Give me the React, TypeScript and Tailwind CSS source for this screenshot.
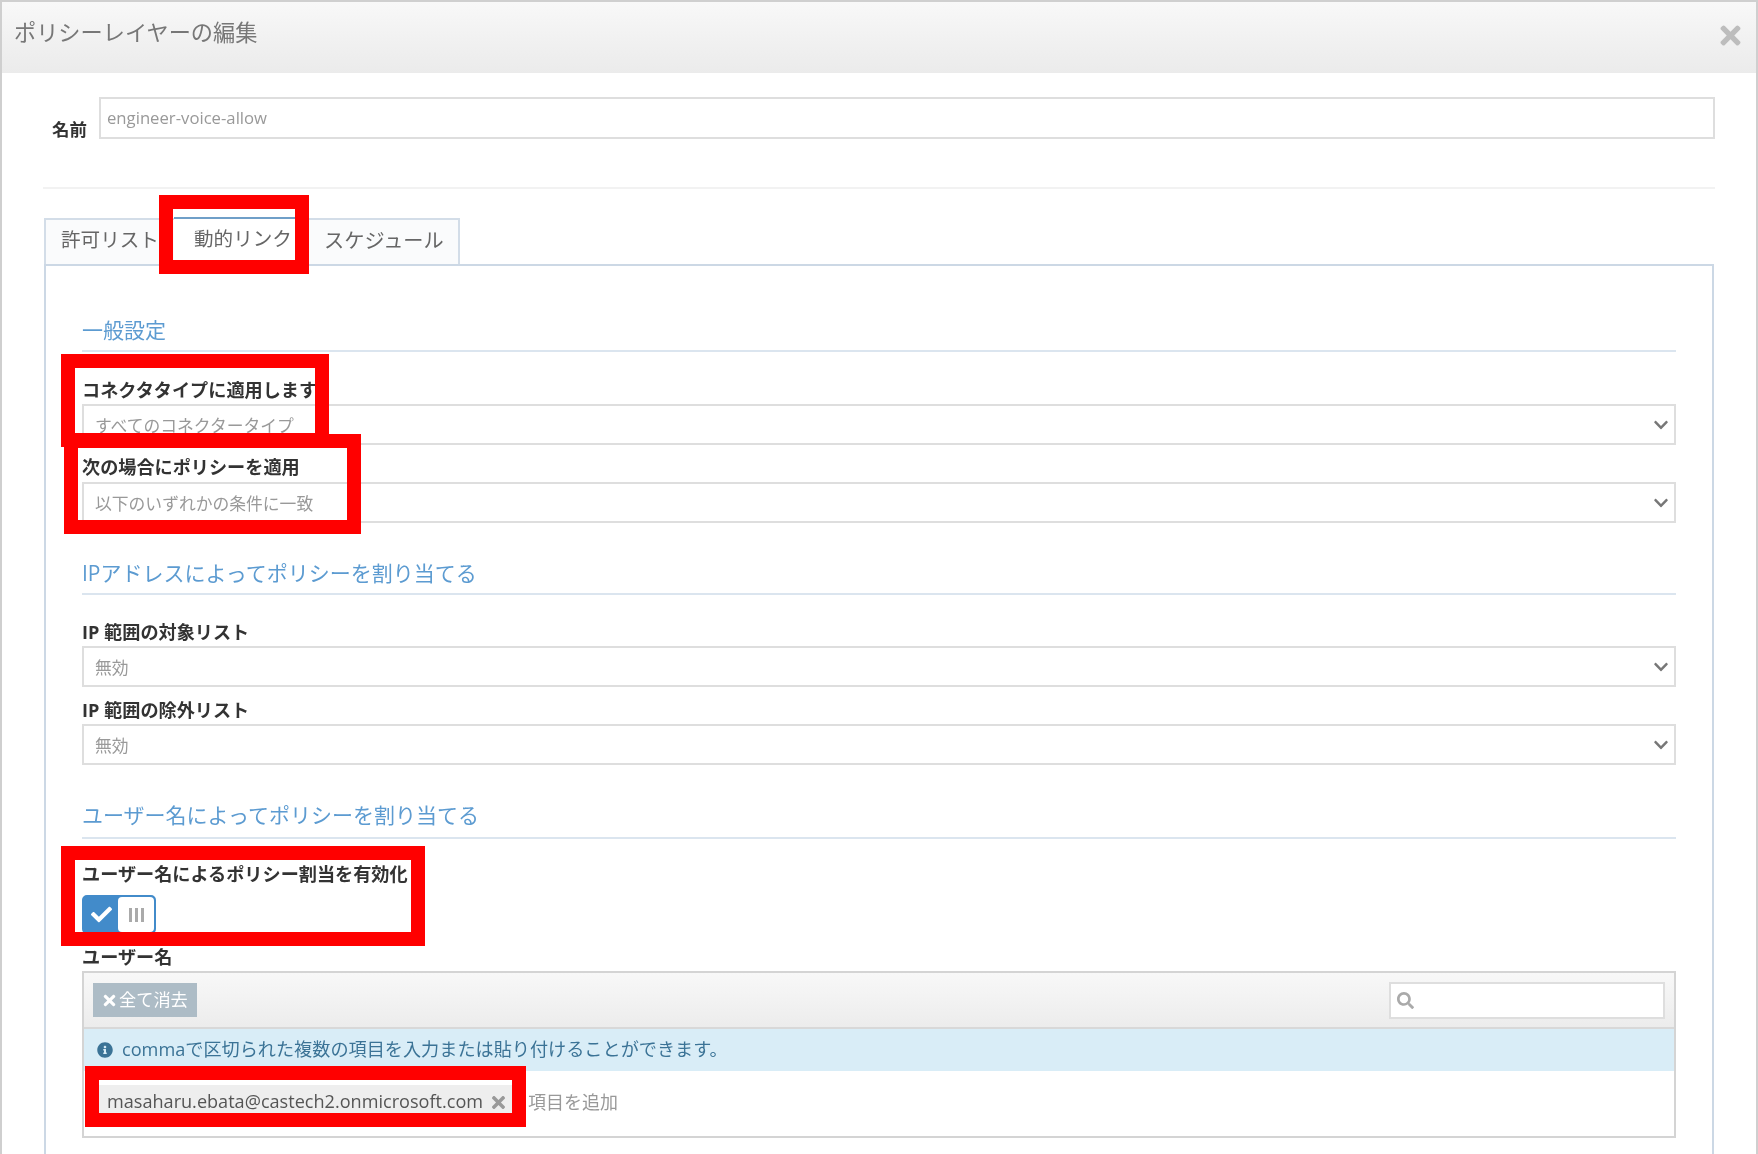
import { FaCheck, FaChevronDown, FaInfoCircle, FaSearch, FaTimes } from 'react-icons/fa'

const font = '[font-family:"Open_Sans","Noto_Sans_CJK_JP",sans-serif]'

function Heading({ text, className }: { text: string; className: string }) {
  return (
    <h3 className={`text-[21px] leading-[36px] text-[#5c9bd1] border-b-2 border-[#dbe5ef] ${className}`}>
      {text}
    </h3>
  )
}

function Label({ text, className }: { text: string; className: string }) {
  return <label className={`block h-[28px] text-[18.15px] leading-[28px] font-bold text-[#333] ${className}`}>{text}</label>
}

function SelectBox({ text, className = '' }: { text: string; className?: string }) {
  return (
    <div className={`flex items-center justify-between h-[41px] border-2 border-[#dedede] pl-[11px] pr-[5px] text-[16.8px] text-[#999] ${className}`}>
      <span className="pt-[2px]">{text}</span>
      <FaChevronDown className="text-[#777] text-[16px]" />
    </div>
  )
}

function RedBox({ className }: { className: string }) {
  return <div className={`absolute z-20 border-[14px] border-[#ff0000] ${className}`} />
}

export default function App() {
  return (
    <div className={`relative w-[1758px] h-[1154px] overflow-hidden bg-white border-t-2 border-l-2 border-r-2 border-[#cfcfcf] blur-[0.4px] ${font}`}>
      <header className="flex items-center justify-between h-[71px] pl-[12px] pr-[11px] pb-[10px] bg-gradient-to-b from-[#f8f8f8] to-[#ebebeb]">
        <h1 className="text-[22.2px] text-[#777]">ポリシーレイヤーの編集</h1>
        <FaTimes className="text-[#bdbdbd] text-[29px] mt-[6px]" />
      </header>

      <div className="flex items-start ml-[50px] mr-[41px] mt-[24px]">
        <span className="w-[47px] mt-[21px] text-[17.5px] leading-[22px] font-bold text-[#333]">名前</span>
        <div className="flex-1 flex items-center h-[42px] border-2 border-[#dedede] pl-[6px] text-[16.7px] text-[#999]">
          engineer-voice-allow
        </div>
      </div>

      <div className="ml-[41px] mr-[41px] mt-[47px] border-t-2 border-[#f2f2f2]" />

      <div className="flex ml-[42px] mt-[29px] h-[46px] text-[19.6px] text-[#666]">
        <div className="w-[130px] pl-[15px] pt-[5px] bg-[#fafbfc] border-2 border-b-0 border-r-0 border-[#d3dde8]">許可リスト</div>
        <div className="w-[130px] pl-[20px] pt-[5px] bg-white border-t-2 border-[#6f9fc8] -mt-[1px] h-[47px] relative z-10">動的リンク</div>
        <div className="w-[156px] pl-[20px] pt-[5px] text-[20.2px] bg-[#fafbfc] border-2 border-b-0 border-l-0 border-[#d3dde8]">スケジュール</div>
      </div>

      <main className="ml-[42px] mr-[42px] h-[900px] border-2 border-[#ccd8e5] pl-[36px] pr-[36px]">
        <Heading text="一般設定" className="mt-[46px] h-[40px]" />
        <Label text="コネクタタイプに適用します" className="mt-[24px]" />
        <SelectBox text="すべてのコネクタータイプ" />
        <Label text="次の場合にポリシーを適用" className="mt-[8px] mb-[1px]" />
        <SelectBox text="以下のいずれかの条件に一致" />

        <Heading text="IPアドレスによってポリシーを割り当てる" className="mt-[32px] h-[40px]" />
        <Label text="IP 範囲の対象リスト" className="mt-[23px]" />
        <SelectBox text="無効" />
        <Label text="IP 範囲の除外リスト" className="mt-[9px]" />
        <SelectBox text="無効" />

        <Heading text="ユーザー名によってポリシーを割り当てる" className="mt-[32px] h-[42px]" />
        <Label text="ユーザー名によるポリシー割当を有効化" className="mt-[21px]" />
        <div className="flex w-[74px] h-[39px] mt-[7px] rounded-[5px] border-2 border-[#428bca] bg-[#428bca]">
          <div className="flex items-center justify-center w-[34px]">
            <FaCheck className="text-white text-[21px]" />
          </div>
          <div className="flex-1 flex items-center justify-center gap-[3px] bg-white rounded-[4px]">
            <span className="w-[3px] h-[14px] bg-[#aaa]" />
            <span className="w-[3px] h-[14px] bg-[#aaa]" />
            <span className="w-[3px] h-[14px] bg-[#aaa]" />
          </div>
        </div>
        <Label text="ユーザー名" className="mt-[9px]" />

        <div className="h-[167px] border-2 border-[#d4d4d4]">
          <div className="flex items-center justify-between h-[56px] px-[9px] border-b-2 border-[#d8d8d8] bg-gradient-to-b from-[#f8f8f8] to-[#ececec]">
            <button className="flex items-center gap-[1px] h-[34px] w-[104px] pl-[8px] bg-[#adbcc6] text-white text-[17.2px]">
              <FaTimes className="text-[17px]" />
              全て消去
            </button>
            <div className="flex items-center w-[276px] h-[37px] border-2 border-[#dedede] bg-white pl-[6px]">
              <FaSearch className="text-[#aaa] text-[17px]" />
            </div>
          </div>
          <div className="flex items-center h-[42px] pl-[13px] bg-[#d9edf7] text-[18.15px] text-[#3b7396]">
            <FaInfoCircle className="text-[16px] mr-[9px]" />
            commaで区切られた複数の項目を入力または貼り付けることができます。
          </div>
          <div className="flex items-center h-[65px] pl-[15px] pb-[3px]">
            <span className="flex items-center h-[34px] w-[413px] pl-[8px] mr-[16px] bg-[#eee] text-[18.1px] text-[#555]">
              masaharu.ebata@castech2.onmicrosoft.com
              <FaTimes className="ml-[6px] text-[#999] text-[19px]" />
            </span>
            <span className="text-[18px] text-[#999]">項目を追加</span>
          </div>
        </div>
      </main>

      <RedBox className="left-[157px] top-[193px] w-[150px] h-[79px]" />
      <RedBox className="left-[59px] top-[352px] w-[268px] h-[93px]" />
      <RedBox className="left-[62px] top-[432px] w-[297px] h-[100px]" />
      <RedBox className="left-[59px] top-[844px] w-[364px] h-[100px]" />
      <RedBox className="left-[83px] top-[1064px] w-[441px] h-[61px]" />
    </div>
  )
}
